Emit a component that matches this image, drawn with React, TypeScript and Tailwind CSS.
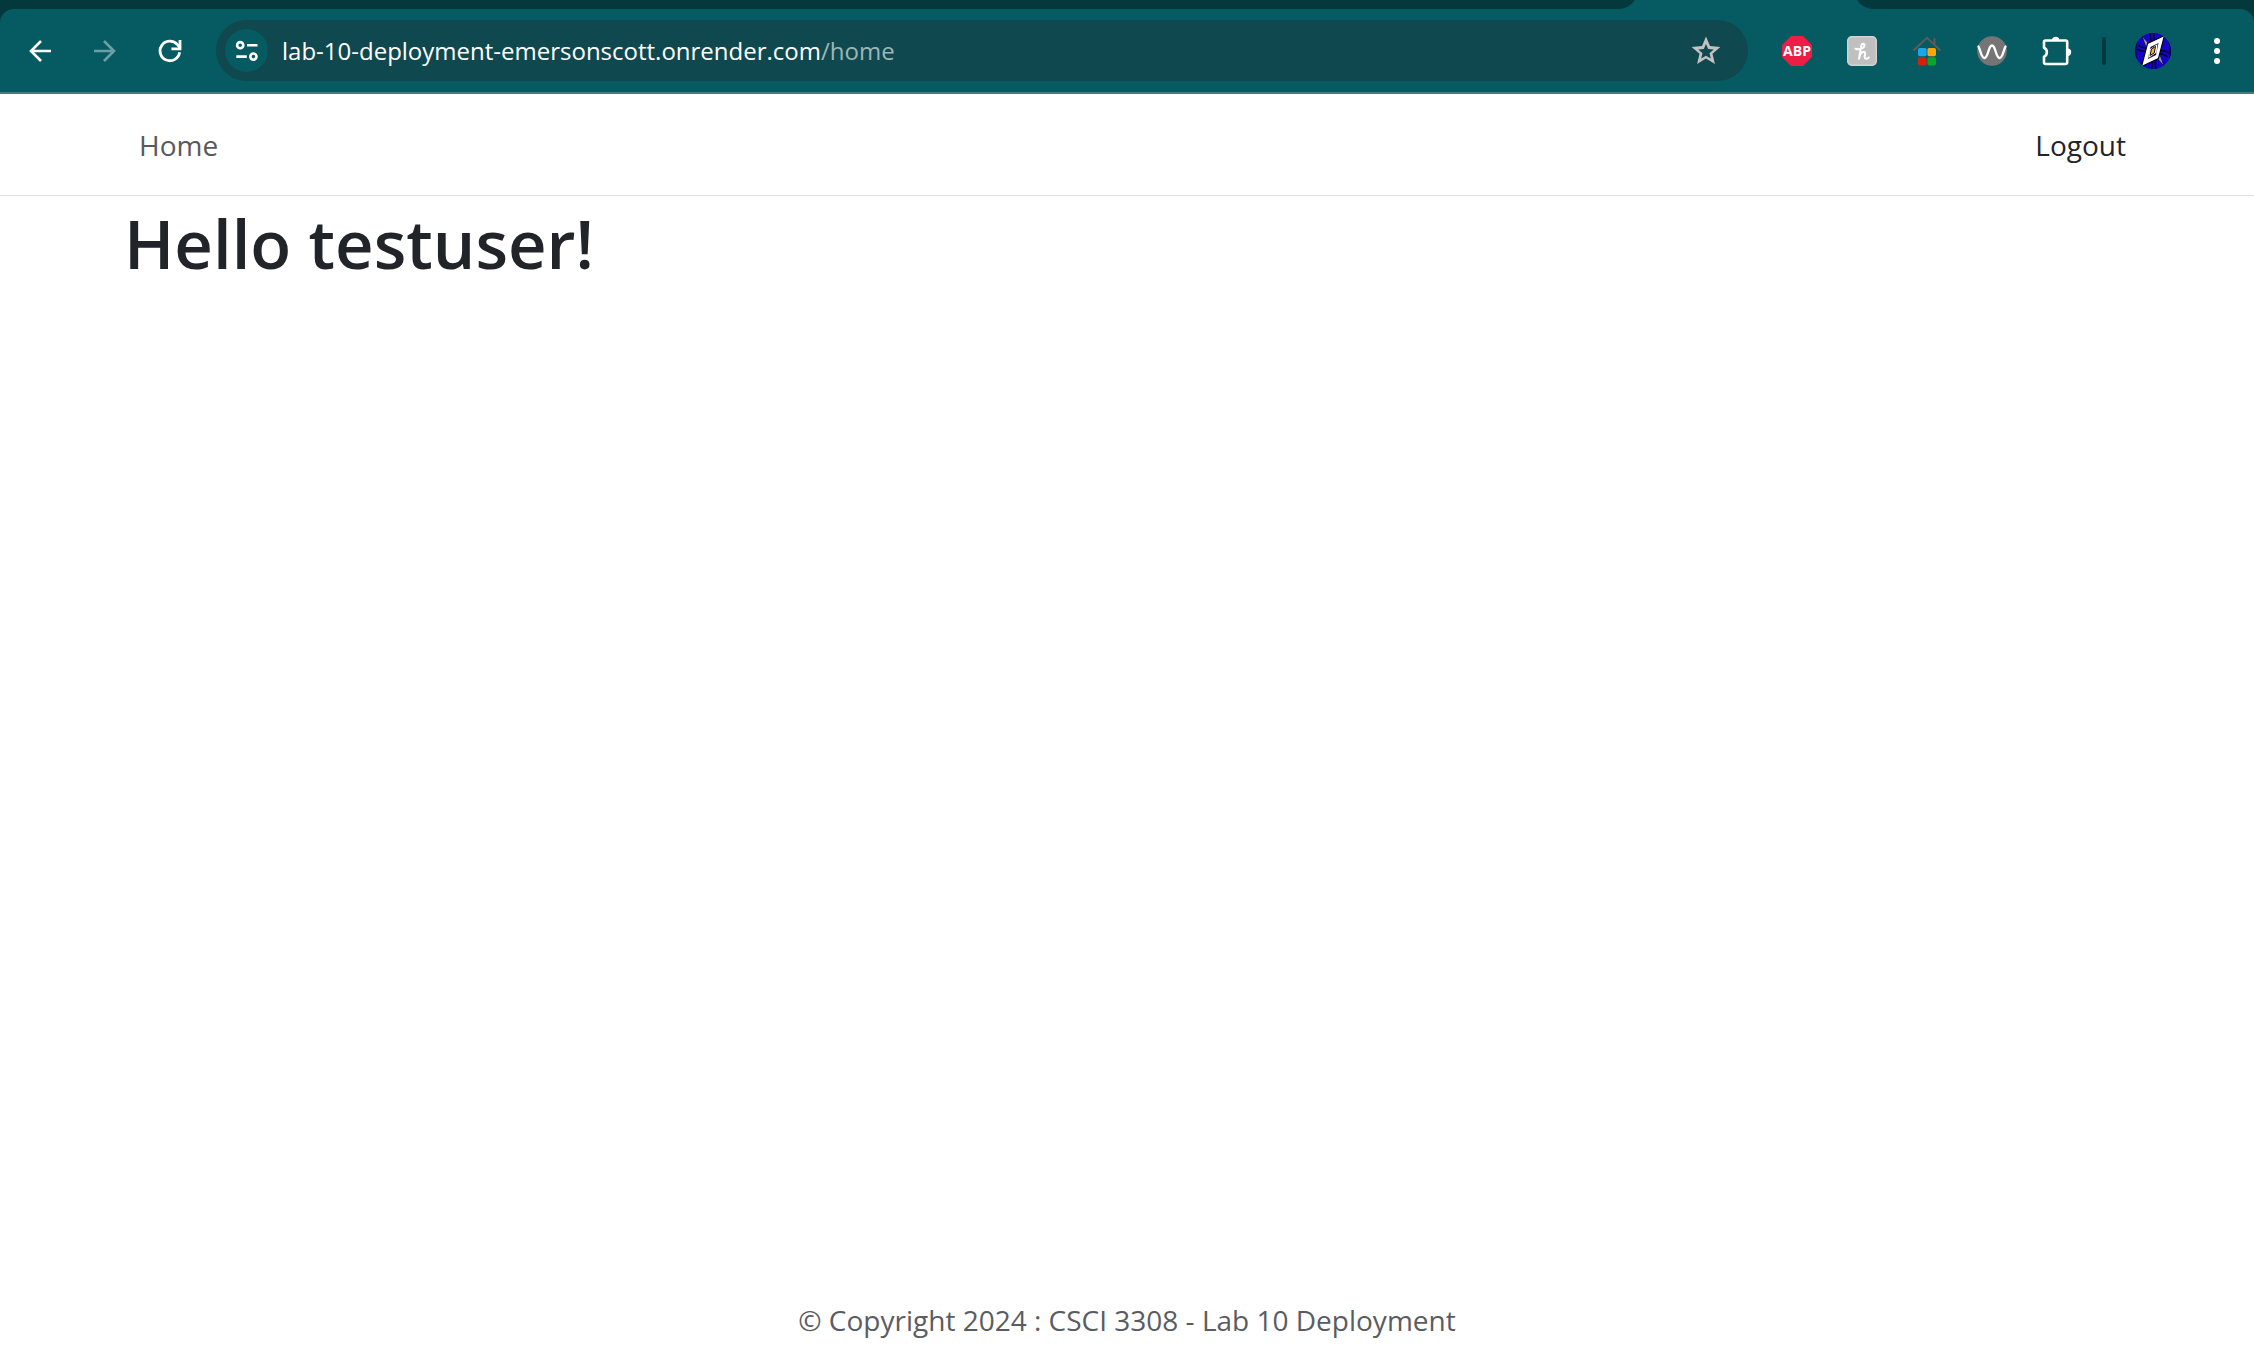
import React from "react";

function BackArrow({ flip = false }: { flip?: boolean }) {
  return (
    <svg
      viewBox="0 0 24 24"
      className={flip ? "size-6 rotate-180 text-[#6b9fa3]" : "size-6 text-white"}
      fill="none"
      stroke="currentColor"
      strokeWidth="2.6"
      aria-hidden="true"
    >
      <path d="M23 12H3M13 2 3 12l10 10" />
    </svg>
  );
}

function ReloadIcon() {
  return (
    <svg viewBox="0 0 24 24" className="size-6" fill="none" stroke="#fff" strokeWidth="2.8" aria-hidden="true">
      <path d="M21.6 13.2A9.8 9.8 0 1 1 19.2 5.4L22 8.6" />
      <path d="M22 1v8.8h-8.6" />
    </svg>
  );
}

function TuneIcon() {
  return (
    <svg viewBox="0 0 24 22" className="h-[22px] w-6" fill="none" stroke="#fff" strokeWidth="2.6" aria-hidden="true">
      <circle cx="5.2" cy="5.2" r="3.1" />
      <path d="M12 5.2h10.5M1.3 16.6h10.5" />
      <circle cx="18.4" cy="16.6" r="3.1" />
    </svg>
  );
}

function StarIcon() {
  return (
    <svg viewBox="0 0 30 29" className="h-[29px] w-[30px]" aria-hidden="true">
      <path
        fill="#c3c1c1"
        fillRule="evenodd"
        d="M15 .5l4 9.6 10.4.9-7.9 6.8 2.4 10.2L15 22.600l-8.900 5.400 2.400-10.200L.6 11l10.400-.9zM15 7.900l-2.200 5.200-5.500.5 4.200 3.600-1.300 5.400L15 19.700l4.800 2.900-1.300-5.400 4.200-3.600-5.500-.5z"
      />
    </svg>
  );
}

function AbpIcon() {
  return (
    <svg viewBox="0 0 30 30" className="size-[30px]" aria-hidden="true">
      <path d="M9 0h12l9 9v12l-9 9H9l-9-9V9z" fill="#ec1e45" />
      <text
        x="15"
        y="20"
        textAnchor="middle"
        fontFamily="Open Sans, sans-serif"
        fontWeight="700"
        fontSize="14"
        fill="#fff"
      >
        ABP
      </text>
    </svg>
  );
}

function HoneyIcon() {
  return (
    <svg viewBox="0 0 30 30" className="size-[30px]" fill="none" aria-hidden="true">
      <rect x="0.7" y="0.7" width="28.600" height="28.600" rx="4" fill="#c0c0c0" stroke="#d2d4d4" strokeWidth="1.400" />
      <path
        d="M8.500 12.800c4 1.400 9-.8 9-3.600 0-2-2.700-1.900-3.200.6l-2.300 13c.8-3.600 2.600-7.300 5-7.100 2.200.2.400 3.700.7 5.600.3 1.900 2.500 1.800 4.100.2"
        stroke="#fff"
        strokeWidth="2"
        strokeLinecap="round"
        strokeLinejoin="round"
      />
    </svg>
  );
}

function HouseIcon() {
  return (
    <svg viewBox="0 0 30 30" className="size-[30px]" fill="none" aria-hidden="true">
      <path d="M1.500 14.500 15 1.800l13.500 12.700M22.500 8.500V2" stroke="#5f5b5c" strokeWidth="1.800" />
      <rect x="6" y="12" width="8.600" height="8.300" rx="1.800" fill="#1ca6e8" />
      <rect x="15.400" y="12" width="8.600" height="8.300" rx="1.800" fill="#fba60a" />
      <rect x="6" y="21.200" width="8.600" height="8.300" rx="1.800" fill="#d4210d" />
      <rect x="15.400" y="21.200" width="8.600" height="8.300" rx="1.800" fill="#0ba32c" />
    </svg>
  );
}

function WaveIcon() {
  return (
    <svg viewBox="0 0 30 30" className="size-[30px]" fill="none" aria-hidden="true">
      <circle cx="15" cy="15" r="14.800" fill="#757575" />
      <path
        d="M1.500 10.500C3.500 14 4.200 22 7.500 22c3.800 0 3.700-12.500 7.500-12.500S18.700 22 22.500 22c3.300 0 4-8 6-11.500"
        stroke="#fff"
        strokeWidth="2.400"
        strokeLinecap="round"
      />
    </svg>
  );
}

function PuzzleIcon() {
  return (
    <svg viewBox="0 0 30 30" className="size-[30px]" aria-hidden="true">
      <path
        d="M3.500 4.500h20.200a1.500 1.500 0 0 1 1.500 1.500v20.500a1.500 1.500 0 0 1-1.500 1.500H3.500A1.500 1.500 0 0 1 2 26.500v-5.800a4.900 4.900 0 0 0 0-8.900V6a1.500 1.500 0 0 1 1.500-1.500z"
        fill="none"
        stroke="#fff"
        strokeWidth="2.600"
        strokeLinejoin="round"
      />
      <path d="M10 4.500a3.700 3.700 0 0 1 7.400 0zM25.500 12.500a3.700 3.700 0 0 1 0 7.400z" fill="#fff" />
    </svg>
  );
}

function AvatarIcon() {
  return (
    <svg viewBox="0 0 36 36" className="size-9" aria-hidden="true">
      <defs>
        <clipPath id="avatar-disc">
          <circle cx="18" cy="18" r="18" />
        </clipPath>
      </defs>
      <g clipPath="url(#avatar-disc)">
        <rect width="36" height="36" fill="#1503c9" />
        <path d="M0 5v26h3C.8 24 .8 12 4 4zM36 5v26h-3c2.200-7 2.200-19-1-27z" fill="#05042b" />
        <path
          d="M15 0c1 5 1 9 0 13M19 0v9M3 12c5 4 7 3 12 2M2 16c5 3 9 3 13 1M21 36c-1-5-1-9 0-13M17 36v-9M33 24c-5-4-7-3-12-2M34 20c-5-3-9-3-13-1"
          fill="none"
          stroke="#060530"
          strokeWidth="1.600"
        />
        <path d="M7 3l8 9-3 5zM29 33l-8-9 3-5z" fill="#9a98c8" stroke="#0b0a3a" strokeWidth="0.800" />
        <path d="M29.500 2.500 12.500 10.500 6.500 33.500 23.500 25.500z" fill="#fff" stroke="#05041c" strokeWidth="1.200" />
        <path d="M23.500 10 15.500 14 13 26 21 22z" fill="#0b0a20" />
        <path d="M22.500 11 14.500 16.500 13.500 25 21.500 19.500z" fill="#fff" />
        <path d="M20.500 13.500 16.500 16 15 22.500 19.200 20z" fill="#ffb60f" stroke="#0b0a20" strokeWidth="1" />
      </g>
    </svg>
  );
}

function DotsIcon() {
  return (
    <svg viewBox="0 0 6 26" className="h-[26px] w-[6px]" fill="#fff" aria-hidden="true">
      <circle cx="3" cy="3" r="3" />
      <circle cx="3" cy="13" r="3" />
      <circle cx="3" cy="23" r="3" />
    </svg>
  );
}

const extensions = [
  { label: "Adblock Plus", icon: <AbpIcon /> },
  { label: "Honey", icon: <HoneyIcon /> },
  { label: "Home tiles", icon: <HouseIcon /> },
  { label: "Wave", icon: <WaveIcon /> },
  { label: "Extensions", icon: <PuzzleIcon /> },
];

function BrowserBar() {
  return (
    <div className="bg-[#03383d]">
      <div className="flex h-[9px] items-end overflow-hidden bg-[#055b61]">
        <div className="h-6 flex-1 rounded-br-[20px] bg-[#03383d]" />
        <div className="w-[216px]" />
        <div className="h-6 w-[400px] rounded-bl-[20px] bg-[#03383d]" />
      </div>
      <div className="flex items-center rounded-t-[14px] border-b-2 border-[#3f7f84] bg-[#055b61] py-[11px] pr-[5px] pl-[7px]">
        <button type="button" aria-label="Back" className="flex h-14 w-[65px] items-center justify-center">
          <BackArrow />
        </button>
        <button type="button" aria-label="Forward" className="flex h-14 w-[65px] items-center justify-center">
          <BackArrow flip />
        </button>
        <button type="button" aria-label="Reload" className="flex h-14 w-[65px] items-center justify-center">
          <ReloadIcon />
        </button>
        <div className="ml-[14px] flex h-[61px] flex-1 items-center rounded-full bg-[#0f484e] pr-[27px] pl-[9px]">
          <button
            type="button"
            aria-label="View site information"
            className="flex size-[43px] items-center justify-center rounded-full bg-[#055b61]"
          >
            <TuneIcon />
          </button>
          <label className="ml-[14px] flex flex-1 items-center font-['Open_Sans',sans-serif] text-[24px] leading-8 text-[#9db6b8]">
            <input
              type="text"
              aria-label="Address"
              defaultValue="lab-10-deployment-emersonscott.onrender.com"
              className="field-sizing-content text-white outline-none"
            />
            <span>/home</span>
          </label>
          <button type="button" aria-label="Bookmark this tab">
            <StarIcon />
          </button>
        </div>
        <div className="ml-4 flex items-center">
          {extensions.map((e) => (
            <button
              key={e.label}
              type="button"
              aria-label={e.label}
              className="flex h-14 w-[65px] items-center justify-center"
            >
              {e.icon}
            </button>
          ))}
        </div>
        <div className="ml-[13px] h-7 w-1 rounded-full bg-[#03383d]" />
        <button type="button" aria-label="Profile" className="ml-[15px] flex h-14 w-16 items-center justify-center">
          <AvatarIcon />
        </button>
        <button type="button" aria-label="Menu" className="flex h-14 w-16 items-center justify-center">
          <DotsIcon />
        </button>
      </div>
    </div>
  );
}

export default function App() {
  return (
    <div className="flex min-h-screen flex-col bg-white font-['Open_Sans',sans-serif] text-[28px] leading-10 text-[#212529]">
      <BrowserBar />
      <nav className="flex items-center justify-between border-b border-[#dee2e6] px-32 pt-[31px] pb-[30px]">
        <a href="#home" className="ml-[11px] text-[#58595b]">
          Home
        </a>
        <a href="#logout">Logout</a>
      </nav>
      <main className="flex-1 px-31 pt-1">
        <h1 className="text-[67px] leading-[86px] font-semibold">Hello testuser!</h1>
      </main>
      <footer className="pb-7 text-center text-[#595d61]">© Copyright 2024 : CSCI 3308 - Lab 10 Deployment</footer>
    </div>
  );
}
